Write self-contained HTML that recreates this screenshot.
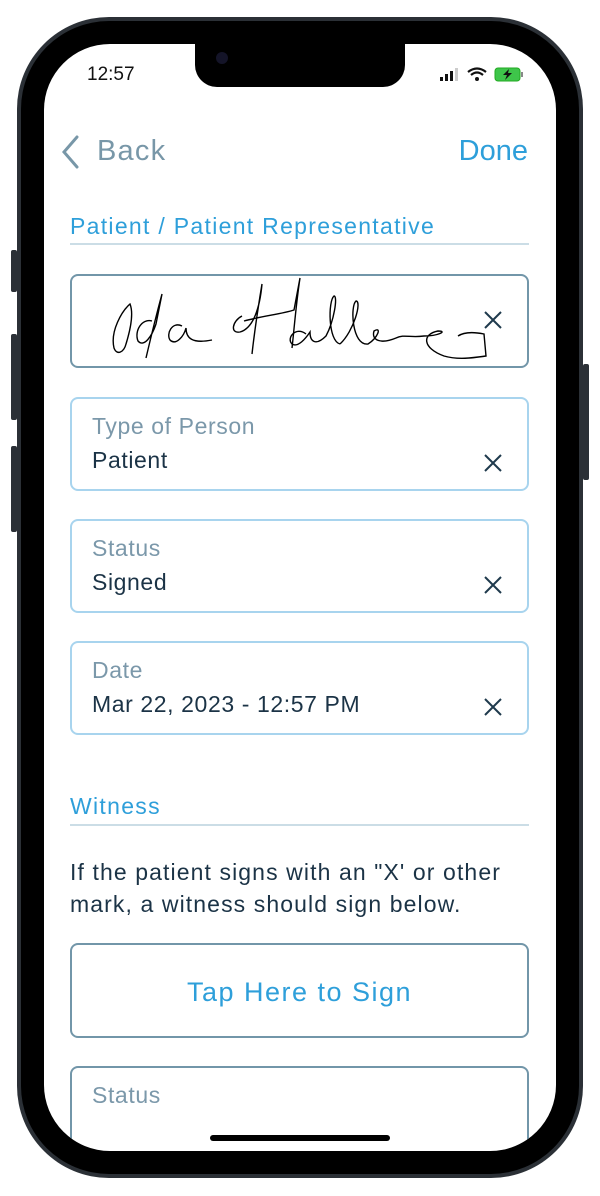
<!DOCTYPE html>
<html><head><meta charset="utf-8"><style>
*{margin:0;padding:0;box-sizing:border-box}
body{width:600px;height:1196px;background:#fff;position:relative;overflow:hidden;font-family:"Liberation Sans",sans-serif}
.abs{position:absolute}
.frame{left:17px;top:17px;width:566px;height:1161px;border-radius:92px;background:#2b3036}
.bezel{left:21px;top:21px;width:558px;height:1153px;border-radius:88px;background:#000}
.screen{left:44px;top:44px;width:512px;height:1107px;border-radius:66px;background:#fff;overflow:hidden}
.btn{background:#2b3036;width:6px;border-radius:2px}
.t{position:absolute;white-space:nowrap}
.box{position:absolute;left:26px;width:459px;height:94px;border-radius:8px}
.lb{border:2px solid #a8d4ee}
.db{border:2px solid #7296a9}
.lab{position:absolute;left:20px;top:14px;font-size:23px;color:#7b98aa;letter-spacing:0.6px}
.val{position:absolute;left:20px;top:48px;font-size:23px;color:#1b3346;letter-spacing:0.6px}
.x{position:absolute;right:24px;top:54px}
.sec{font-size:23px;color:#2e9fda;letter-spacing:1.3px}
.rule{position:absolute;left:26px;width:459px;height:2px;background:#cbdde6}
</style></head><body>
<div class="abs btn" style="left:11px;top:250px;height:42px"></div>
<div class="abs btn" style="left:11px;top:334px;height:86px"></div>
<div class="abs btn" style="left:11px;top:446px;height:86px"></div>
<div class="abs btn" style="left:583px;top:364px;height:116px"></div>
<div class="abs frame"></div>
<div class="abs bezel"></div>
<div class="abs screen">
  <div class="t" style="left:43px;top:20px;font-size:19px;color:#111">12:57</div>
  <div class="abs" style="left:151px;top:-2px;width:210px;height:45px;background:#000;border-radius:0 0 22px 22px"></div>
  <div class="abs" style="left:172px;top:8px;width:12px;height:12px;border-radius:6px;background:#141428"></div>
  <svg class="abs" style="left:396px;top:23px" width="100" height="18" viewBox="0 0 100 18">
    <rect x="0" y="10" width="3" height="4" fill="#111"/><rect x="5" y="7" width="3" height="7" fill="#111"/><rect x="10" y="4" width="3" height="10" fill="#111"/><rect x="15" y="1" width="3" height="13" fill="#ccc"/>
    <path d="M28 5 Q37 -2 46 5" stroke="#111" stroke-width="2.2" fill="none"/><path d="M31 8 Q37 3 43 8" stroke="#111" stroke-width="2.2" fill="none"/><circle cx="37" cy="12" r="2" fill="#111"/>
    <rect x="55" y="1" width="25" height="13" rx="3" fill="#3ec54a" stroke="#2a2" stroke-width="1"/><rect x="81" y="5" width="2" height="5" fill="#888"/>
    <path d="M69 2 L63 8 L67 8 L65 13 L72 6 L68 6 Z" fill="#111"/>
  </svg>
  <svg class="abs" style="left:15px;top:90px" width="22" height="36"><path d="M18 3 L5 18 L18 33" stroke="#7897a8" stroke-width="3" fill="none" stroke-linecap="round"/></svg>
  <div class="t" style="left:53px;top:91px;font-size:29px;color:#7897a8;letter-spacing:1.2px">Back</div>
  <div class="t" style="right:28px;top:91px;font-size:29px;color:#2e9fda">Done</div>
  <div class="t sec" style="left:26px;top:169px">Patient / Patient Representative</div>
  <div class="rule" style="top:199px"></div>
  <div class="box db" style="top:230px">
    <svg class="abs" style="left:0;top:0" width="455" height="90">
      <g stroke="#000" stroke-width="1.4" fill="none">
      <path d="M58 28 C50 35 38 55 42 72 C45 80 52 76 54 68 C58 55 62 38 58 28 Z"/>
      <path d="M80 45 C70 42 62 55 66 65 C72 72 80 60 84 48 L90 18 C84 40 78 65 74 82"/>
      <path d="M110 50 C100 45 94 58 98 64 C104 70 112 60 114 52 C114 62 120 68 140 64"/>
      <path d="M170 40 C160 45 158 58 168 56 C182 52 188 30 190 8 C186 32 182 60 180 78"/>
      <path d="M172 45 C190 40 210 38 222 34 L228 2 C224 28 222 55 220 72"/>
      <path d="M234 58 C224 50 214 62 220 68 C226 72 234 62 238 56 C238 66 244 70 254 60 C262 45 266 20 262 20 C256 25 256 65 268 68"/>
      <path d="M268 68 C282 55 290 25 284 25 C278 30 280 70 296 68 C306 62 310 50 302 55 C299 65 310 68 324 62 C332 58 338 62 352 60 C366 60 376 55 366 55 C350 58 350 72 372 80 C386 84 400 82 414 80 L412 58 C402 56 392 56 386 60"/>
      </g>
    </svg>
    <svg class="x" style="top:34px" width="20" height="20"><path d="M2 2 L18 18 M18 2 L2 18" stroke="#1f3a4d" stroke-width="2"/></svg>
  </div>
  <div class="box lb" style="top:353px"><div class="lab">Type of Person</div><div class="val">Patient</div><svg class="x" width="20" height="20"><path d="M2 2 L18 18 M18 2 L2 18" stroke="#1f3a4d" stroke-width="2"/></svg></div>
  <div class="box lb" style="top:475px"><div class="lab">Status</div><div class="val">Signed</div><svg class="x" width="20" height="20"><path d="M2 2 L18 18 M18 2 L2 18" stroke="#1f3a4d" stroke-width="2"/></svg></div>
  <div class="box lb" style="top:597px"><div class="lab">Date</div><div class="val">Mar 22, 2023 - 12:57 PM</div><svg class="x" width="20" height="20"><path d="M2 2 L18 18 M18 2 L2 18" stroke="#1f3a4d" stroke-width="2"/></svg></div>
  <div class="t sec" style="left:26px;top:749px">Witness</div>
  <div class="rule" style="top:780px"></div>
  <div class="t" style="left:26px;top:812px;font-size:23px;color:#1b3346;line-height:32px;letter-spacing:1.1px">If the patient signs with an "X' or other<br>mark, a witness should sign below.</div>
  <div class="box db" style="top:899px;height:95px;text-align:center"><div style="font-size:27px;color:#2e9fda;line-height:95px;letter-spacing:1.5px">Tap Here to Sign</div></div>
  <div class="box db" style="top:1022px;height:120px"><div class="lab">Status</div></div>
  <div class="abs" style="left:166px;top:1091px;width:180px;height:6px;border-radius:3px;background:#000"></div>
</div>
</body></html>
